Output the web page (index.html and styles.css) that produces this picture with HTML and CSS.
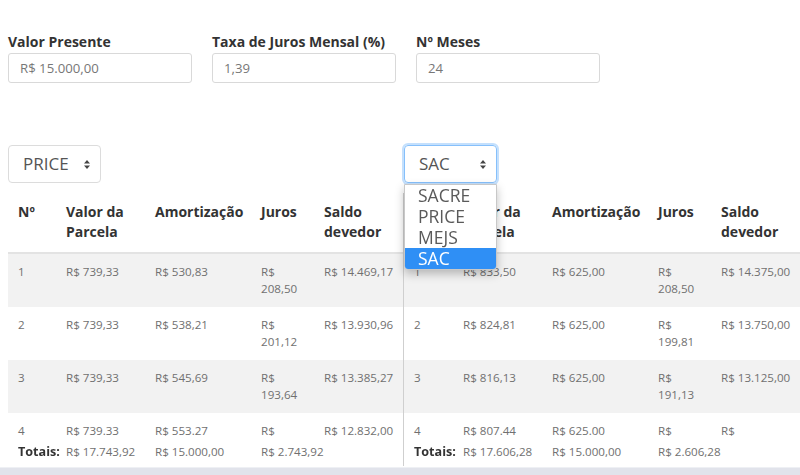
FILE: index.html
```html
<!DOCTYPE html>
<html lang="pt-BR">
<head>
  <meta charset="UTF-8">
  <title>Simulador de Financiamento</title>
  <link rel="stylesheet" href="styles.css">
</head>
<body>
  <div class="inputs">
    <div class="field">
      <label>Valor Presente</label>
      <input type="text" value="R$ 15.000,00">
    </div>
    <div class="field">
      <label>Taxa de Juros Mensal (%)</label>
      <input type="text" value="1,39">
    </div>
    <div class="field">
      <label>Nº Meses</label>
      <input type="text" value="24">
    </div>
  </div>

  <div class="calcs">
    <div class="calc left">
      <div class="select">PRICE <span class="arrows"><svg width="6" height="9" viewBox="0 0 6 9"><path d="M3 0 L6 3.5 H0 Z M3 9 L6 5.5 H0 Z" fill="#444"/></svg></span></div>
      <div class="table-wrap">
        <table>
          <colgroup><col style="width:48px"><col style="width:89px"><col style="width:106px"><col style="width:63px"><col style="width:89px"></colgroup>
          <thead>
            <tr><th>Nº</th><th>Valor da Parcela</th><th>Amortização</th><th>Juros</th><th>Saldo devedor</th></tr>
          </thead>
          <tbody>
            <tr><td>1</td><td>R$ 739,33</td><td>R$ 530,83</td><td>R$ 208,50</td><td>R$ 14.469,17</td></tr>
            <tr><td>2</td><td>R$ 739,33</td><td>R$ 538,21</td><td>R$ 201,12</td><td>R$ 13.930,96</td></tr>
            <tr><td>3</td><td>R$ 739,33</td><td>R$ 545,69</td><td>R$ 193,64</td><td>R$ 13.385,27</td></tr>
            <tr><td>4</td><td>R$ 739.33</td><td>R$ 553.27</td><td>R$ 186,06</td><td>R$ 12.832,00</td></tr>
          </tbody>
          <tfoot>
            <tr><td class="total-label">Totais:</td><td>R$ 17.743,92</td><td>R$ 15.000,00</td><td colspan="2">R$ 2.743,92</td></tr>
          </tfoot>
        </table>
      </div>
    </div>

    <div class="calc right">
      <div class="select-box">
        <div class="select focused">SAC <span class="arrows"><svg width="6" height="9" viewBox="0 0 6 9"><path d="M3 0 L6 3.5 H0 Z M3 9 L6 5.5 H0 Z" fill="#444"/></svg></span></div>
        <ul class="options">
          <li>SACRE</li>
          <li>PRICE</li>
          <li>MEJS</li>
          <li class="active">SAC</li>
        </ul>
      </div>
      <div class="table-wrap divider">
        <table>
          <colgroup><col style="width:49px"><col style="width:89px"><col style="width:106px"><col style="width:63px"><col style="width:89px"></colgroup>
          <thead>
            <tr><th>Nº</th><th>Valor da Parcela</th><th>Amortização</th><th>Juros</th><th>Saldo devedor</th></tr>
          </thead>
          <tbody>
            <tr><td>1</td><td>R$ 833,50</td><td>R$ 625,00</td><td>R$ 208,50</td><td>R$ 14.375,00</td></tr>
            <tr><td>2</td><td>R$ 824,81</td><td>R$ 625,00</td><td>R$ 199,81</td><td>R$ 13.750,00</td></tr>
            <tr><td>3</td><td>R$ 816,13</td><td>R$ 625,00</td><td>R$ 191,13</td><td>R$ 13.125,00</td></tr>
            <tr><td>4</td><td>R$ 807.44</td><td>R$ 625.00</td><td>R$ 182.44</td><td class="wrap">R$ 12.500.000,00</td></tr>
          </tbody>
          <tfoot>
            <tr><td class="total-label">Totais:</td><td>R$ 17.606,28</td><td>R$ 15.000,00</td><td colspan="2">R$ 2.606,28</td></tr>
          </tfoot>
        </table>
      </div>
    </div>
  </div>

  <div class="scrollbar"></div>
</body>
</html>
```

FILE: styles.css
```css
body {
  margin: 0;
  padding: 0;
  font-family: "Open Sans", sans-serif;
  color: #333;
  background: #fff;
  width: 800px;
  height: 475px;
  overflow: hidden;
}

.inputs {
  display: flex;
  gap: 20px;
  padding: 32px 0 0 8px;
}

.field {
  width: 184px;
}

.field label {
  display: block;
  font-size: 14px;
  font-weight: 700;
  line-height: 20px;
  margin-bottom: 1px;
  color: #333;
}

.field input {
  box-sizing: border-box;
  width: 184px;
  height: 30px;
  padding: 0 11px;
  border: 1px solid #d9d9d9;
  border-radius: 3px;
  font-family: inherit;
  font-size: 13.2px;
  color: #777;
  outline: none;
}

.calcs {
  display: flex;
  padding: 62px 0 0 8px;
}

.calc.left {
  width: 395px;
}

.calc.right {
  width: 397px;
}

.select {
  box-sizing: border-box;
  width: 93px;
  height: 38px;
  border: 1px solid #dcdcdc;
  border-radius: 4px;
  padding: 0 0 0 14px;
  font-size: 17px;
  line-height: 36px;
  color: #555;
  position: relative;
}

.select .arrows {
  position: absolute;
  right: 10px;
  top: 14px;
  line-height: 0;
}

.select.focused {
  border-color: #86c0fb;
  box-shadow: 0 0 0 2px #c4e0fd;
}

.select-box {
  position: relative;
  margin-left: 1px;
  width: 93px;
}

.options {
  position: absolute;
  top: 39px;
  left: 0;
  width: 93px;
  box-sizing: border-box;
  margin: 0;
  padding: 0;
  list-style: none;
  background: #fff;
  border: 1px solid #c8c8c8;
  border-radius: 0 0 4px 4px;
  box-shadow: 0 4px 10px rgba(0, 0, 0, 0.25);
  z-index: 5;
  overflow: hidden;
}

.options li {
  font-size: 17.5px;
  line-height: 21px;
  padding: 0 0 0 13px;
  color: #5a5a5a;
}

.options li.active {
  background: #2f8ff5;
  color: #fff;
}

.table-wrap {
  margin-top: 10px;
  height: 273px;
  overflow: hidden;
}

.table-wrap.divider {
  border-left: 1px solid #cfcfcf;
}

table {
  border-collapse: collapse;
  table-layout: fixed;
  width: 395px;
}

th {
  text-align: left;
  vertical-align: top;
  font-size: 14px;
  font-weight: 700;
  line-height: 20px;
  padding: 9px 10px 10px;
  color: #333;
  border-bottom: 2px solid #e3e3e3;
}

td {
  vertical-align: top;
  font-size: 11.6px;
  line-height: 17px;
  padding: 9px 10px 10px;
  color: #707070;
}

td:nth-child(5) {
  white-space: nowrap;
}

td.wrap {
  white-space: normal;
}

tbody tr:nth-child(odd) td {
  background: #f2f2f2;
}

tfoot td {
  position: sticky;
  bottom: 0;
  background: #fff;
  padding: 2px 10px 6px;
  white-space: nowrap;
}

tfoot td.total-label {
  z-index: 2;
  padding-right: 0;
  font-weight: 700;
  font-size: 12.6px;
  color: #333;
}

.scrollbar {
  position: absolute;
  left: 0;
  top: 467px;
  width: 800px;
  height: 8px;
  background: #e1e3eb;
  border-top: 1px solid #eef0f4;
}
```
